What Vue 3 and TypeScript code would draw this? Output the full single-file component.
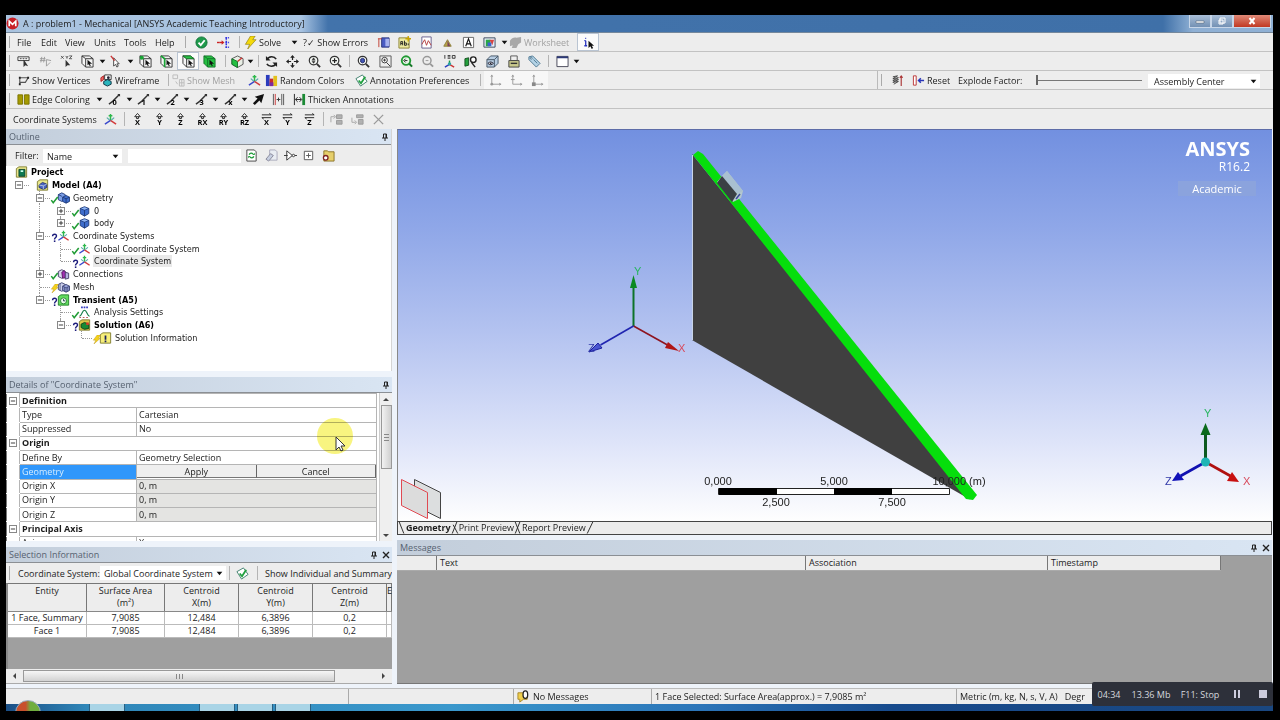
<script setup lang="ts">
import { ref } from 'vue'

type Kind = 'grip' | 'sep' | 'icon' | 'caret' | 'text'
interface Tool {
  k: Kind
  icon?: string
  label?: string
  title?: string
  cls?: string
  glyph?: string
}

const grip: Tool = { k: 'grip' }
const sep: Tool = { k: 'sep' }
const caret: Tool = { k: 'caret', title: 'More options' }
const ico = (icon: string, title: string, cls = '', glyph = ''): Tool => ({ k: 'icon', icon, title, cls, glyph })
const txt = (label: string, icon = '', cls = ''): Tool => ({ k: 'text', label, icon, cls })

const mainBar: Tool[] = [
  grip, txt('File'), txt('Edit'), txt('View'), txt('Units'), txt('Tools'), txt('Help'), grip,
  ico('ok', 'Check'), ico('branch', 'Branch'), sep, txt('Solve', 'bolt'), caret,
  txt('?✓ Show Errors'), ico('newwin', 'New Section'), ico('comment', 'Comment'), ico('chart', 'Chart'),
  ico('tag', 'Image'), ico('lettera', 'Annotation'), ico('figure', 'Figure'), caret,
  txt('Worksheet', 'sheet', 'off'), ico('info', 'Selection Information', 'pressed'),
]
const viewBar: Tool[] = [
  grip, ico('abc', 'Label'), ico('hash', 'Direction', 'off'), ico('xyz', 'Coordinates'), ico('pick', 'Select mode'), caret,
  ico('cursor', 'Select type'), caret, ico('vertex', 'Vertex'), ico('edge', 'Edge'), ico('face', 'Face', 'pressed'),
  ico('body', 'Body'), sep, ico('extend', 'Extend'), caret, sep, ico('rotate', 'Rotate'), ico('pan', 'Pan'),
  ico('zoom', 'Zoom'), ico('zoomin', 'Box Zoom'), sep, ico('fit', 'Zoom to Fit'), ico('magbox', 'Magnifier'),
  ico('prev', 'Previous View'), ico('next', 'Next View'), ico('iso', 'Isometric'), ico('look', 'Look At'),
  ico('views', 'Manage Views'), ico('print', 'Print'), ico('label', 'Tag'), sep, ico('window', 'Viewports'), caret,
]
const displayBar: Tool[] = [
  grip, txt('Show Vertices', 'verts'), txt('Wireframe', 'wire'), sep, txt('Show Mesh', 'mesh', 'off'),
  ico('triad', 'Show Coordinate Systems'), txt('Random Colors', 'colors'), txt('Annotation Preferences', 'prefs'), sep,
  ico('axis1', 'Axis', 'light'), ico('axis2', 'Axis', 'light'), ico('axis3', 'Axis', 'light'),
]
const edgeBar: Tool[] = [
  grip, txt('Edge Coloring', 'edges'), caret,
  ico('eline', 'Free', '', '0'), caret, ico('eline', 'Single', '', '1'), caret, ico('eline', 'Double', '', '2'), caret,
  ico('eline', 'Triple', '', '3'), caret, ico('eline', 'Multiple', '', 'x'), caret,
  ico('thick', 'Direction'), ico('pipes', 'Spacing'), txt('Thicken Annotations', 'thicken'),
]
const coordBar: Tool[] = [
  txt('Coordinate Systems'), ico('triad', 'Create Coordinate System'), sep,
  ico('offset', 'Offset X', '', 'X'), ico('offset', 'Offset Y', '', 'Y'), ico('offset', 'Offset Z', '', 'Z'),
  ico('offset', 'Rotate X', '', 'RX'), ico('offset', 'Rotate Y', '', 'RY'), ico('offset', 'Rotate Z', '', 'RZ'),
  ico('flip', 'Flip X', '', 'X'), ico('flip', 'Flip Y', '', 'Y'), ico('flip', 'Flip Z', '', 'Z'), sep,
  ico('up', 'Move Up', 'off'), ico('down', 'Move Down', 'off'), ico('del', 'Delete', 'off'),
]
const bars = [
  { name: 'main', items: mainBar },
  { name: 'view', items: viewBar },
  { name: 'display', items: displayBar },
  { name: 'edge', items: edgeBar },
  { name: 'coord', items: coordBar },
]

interface Node {
  label: string
  icon: string
  guides?: string[]
  joint?: string
  box?: string
  status?: string
  bold?: boolean
  selected?: boolean
}
const tree: Node[] = [
  { label: 'Project', icon: 'project', bold: true },
  { label: 'Model (A4)', icon: 'model', joint: 'first', box: '-', bold: true },
  { label: 'Geometry', icon: 'geom', guides: [''], joint: 'tee', box: '-', status: 'tick' },
  { label: '0', icon: 'cube', guides: ['', 'v'], joint: 'tee', box: '+', status: 'tick' },
  { label: 'body', icon: 'cube', guides: ['', 'v'], joint: 'last', box: '+', status: 'tick' },
  { label: 'Coordinate Systems', icon: 'triad', guides: [''], joint: 'tee', box: '-', status: 'ask' },
  { label: 'Global Coordinate System', icon: 'triad', guides: ['', 'v'], joint: 'tee', status: 'tick' },
  { label: 'Coordinate System', icon: 'triad', guides: ['', 'v'], joint: 'last', status: 'ask', selected: true },
  { label: 'Connections', icon: 'conn', guides: [''], joint: 'tee', box: '+', status: 'tick' },
  { label: 'Mesh', icon: 'meshes', guides: [''], joint: 'tee', status: 'flash' },
  { label: 'Transient (A5)', icon: 'clock', guides: [''], joint: 'last', box: '-', status: 'ask', bold: true },
  { label: 'Analysis Settings', icon: 'settings', guides: ['', ''], joint: 'tee', status: 'tick' },
  { label: 'Solution (A6)', icon: 'solution', guides: ['', ''], joint: 'last', box: '-', status: 'ask', bold: true },
  { label: 'Solution Information', icon: 'solinfo', guides: ['', '', ''], joint: 'last', status: 'flash' },
]

interface Detail {
  name: string
  value?: string
  group?: boolean
  ro?: boolean
  edit?: boolean
}
const details: Detail[] = [
  { name: 'Definition', group: true },
  { name: 'Type', value: 'Cartesian' },
  { name: 'Suppressed', value: 'No' },
  { name: 'Origin', group: true },
  { name: 'Define By', value: 'Geometry Selection' },
  { name: 'Geometry', edit: true },
  { name: 'Origin X', value: '0, m', ro: true },
  { name: 'Origin Y', value: '0, m', ro: true },
  { name: 'Origin Z', value: '0, m', ro: true },
  { name: 'Principal Axis', group: true },
  { name: 'Axis', value: 'X' },
]

const selection = [
  ['1 Face, Summary', '7,9085', '12,484', '6,3896', '0,2', ''],
  ['Face 1', '7,9085', '12,484', '6,3896', '0,2', ''],
]

const explode = ref(0)
const filterText = ref('')
</script>

<template>
  <svg class="defs" aria-hidden="true">
    <symbol id="caret" viewBox="0 0 8 8"><path d="M1.500 2.500h5L4 5.500z" fill="#111" /></symbol>
    <symbol id="pin" viewBox="0 0 8 8"><path d="M2.500 1v4M5.500 1v4M2.500 1h3M1 5h6M4 5v3" stroke="#222" fill="none" /><path d="M5 1v4" stroke="#222" /></symbol>
    <symbol id="close" viewBox="0 0 8 8"><path d="M1 1l6 6M7 1L1 7" stroke="#222" stroke-width="1.400" /></symbol>
    <symbol id="ok" viewBox="0 0 14 14"><circle cx="7" cy="7" r="6" fill="#1f9a4c" stroke="#0f7136" /><path d="M3.800 7.200l2.400 2.600 4.200-5.200" stroke="#fff" stroke-width="2" fill="none" /></symbol>
    <symbol id="branch" viewBox="0 0 14 14"><path d="M0 7h3" stroke="#c22" stroke-width="1.500" /><path d="M3 7h3" stroke="#c22" stroke-width="1.500" /><path d="M5 4.500L8 7 5 9.500z" fill="#c22" /><path d="M9 2h4M9 7h4M9 12h4M10 2v10" stroke="#3333e0" stroke-width="1.600" stroke-dasharray="2 1" fill="none" /></symbol>
    <symbol id="bolt" viewBox="0 0 14 14"><path d="M7 0h5L9.500 4H13L4 14l2-5H1.500z" fill="#f4d90a" stroke="#8d7c12" stroke-width=".7" /></symbol>
    <symbol id="newwin" viewBox="0 0 14 14"><path d="M5 2h8v10H5z" fill="#4a5cc4" stroke="#2b357c" /><path d="M2 3v9M1 3h4" stroke="#c03a2e" fill="none" /><path d="M9 3h4v8H9z" fill="#a6b2ee" /></symbol>
    <symbol id="comment" viewBox="0 0 14 14"><path d="M1 2h11v11H1z" fill="#eceaa0" stroke="#8a8334" /><path d="M3 10V6h2v4M3 8h2M7 5v5h2V7.500H7M11 8v2" stroke="#222" fill="none" /><path d="M11 0v6M8 3h6" stroke="#c9a400" stroke-width="1.500" /></symbol>
    <symbol id="chart" viewBox="0 0 14 14"><path d="M2 1h10v12H2z" fill="#fff" stroke="#675f8c" /><path d="M2 9l3-5 2 6 2-5 3 5" stroke="#b33c3c" fill="none" /></symbol>
    <symbol id="tag" viewBox="0 0 14 14"><path d="M7 4l4 7H3z" fill="#b8a34a" stroke="#8e7f3a" /><path d="M7 5l3 6H7z" fill="#7a3f5d" /></symbol>
    <symbol id="lettera" viewBox="0 0 14 14"><path d="M1.500 1.500h11v11h-11z" fill="#fff" stroke="#666" /><path d="M4 11l3-8 3 8M5 8.500h4" stroke="#111" fill="none" stroke-width="1.200" /></symbol>
    <symbol id="figure" viewBox="0 0 14 14"><path d="M1 2h12v10H1z" fill="#e8f0f8" stroke="#38465c" /><path d="M3 4h5v7H3z" fill="#28a745" /><path d="M7 4h5l-2 6z" fill="#d84343" /><path d="M5 7h4v4H5z" fill="#3a63cf" /></symbol>
    <symbol id="sheet" viewBox="0 0 14 14"><path d="M1 5c2-3 5-4 7-3l5-1v6l-3 2-2 4H3l1-3-3 1z" fill="#8c8c8c" /></symbol>
    <symbol id="info" viewBox="0 0 14 14"><path d="M4 5v5M2.500 5H4M2.500 10.500h3M3.500 2.500h1" stroke="#2a35c0" stroke-width="1.400" fill="none" /><path d="M7 5v8l2-2 1.500 3 1.500-1-1.500-2.500H13z" fill="#111" /></symbol>
    <symbol id="abc" viewBox="0 0 14 14"><path d="M1 2h12v4H1z" fill="#fff" stroke="#333" /><path d="M3 4h8" stroke="#333" stroke-dasharray="2 1" /><path d="M7 5v8l2-2 3 1-4-6" fill="#333" /></symbol>
    <symbol id="hash" viewBox="0 0 14 14"><path d="M3 2L2 8M6 2L5 8M1 4h6M1 6h6M8 5v7l4-4M8 5l5 1" stroke="#777" fill="none" /></symbol>
    <symbol id="xyz" viewBox="0 0 14 14"><path d="M1 1l3 3M4 1L1 4M6 1l1.500 1.500L9 1M7.500 2v2M10 1h3l-3 3h3" stroke="#333" fill="none" stroke-width=".8" /><path d="M6 5v8l2-2 3 0z" fill="#333" /></symbol>
    <symbol id="cubeline" viewBox="0 0 14 14"><path d="M1 1h8l4 3v9H5L1 9zM1 1l4 3h8M5 4v9" fill="#f6f6f6" stroke="#333" /></symbol>
    <symbol id="pick" viewBox="0 0 14 14"><use href="#cubeline" /><path d="M7 5v6l1.500-1 1 2 1-.5-1-2H12z" fill="#111" /></symbol>
    <symbol id="cursor" viewBox="0 0 14 14"><path d="M5 3v9l2-2 1.500 3 1.500-1-1.500-2.500H11z" fill="#fff" stroke="#444" /><path d="M2 1l4 5" stroke="#c33" stroke-width="1.500" /></symbol>
    <symbol id="vertex" viewBox="0 0 14 14"><use href="#cubeline" /><circle cx="3" cy="3" r="2.200" fill="#19a535" /><path d="M7 5v6l1.500-1 1 2 1-.5-1-2H12z" fill="#111" /></symbol>
    <symbol id="edge" viewBox="0 0 14 14"><use href="#cubeline" /><path d="M1 1l4 3v9" stroke="#19a535" stroke-width="1.800" fill="none" /><path d="M7 5v6l1.500-1 1 2 1-.5-1-2H12z" fill="#111" /></symbol>
    <symbol id="face" viewBox="0 0 14 14"><use href="#cubeline" /><path d="M1 1h8l4 3H5z" fill="#27c445" stroke="#17792a" /><path d="M7 5v6l1.500-1 1 2 1-.5-1-2H12z" fill="#111" /></symbol>
    <symbol id="body" viewBox="0 0 14 14"><path d="M1 1h8l4 3v9H5L1 9z" fill="#25bf41" stroke="#15732a" /><path d="M1 1l4 3h8M5 4v9" fill="none" stroke="#15732a" /><path d="M7 5v6l1.500-1 1 2 1-.5-1-2H12z" fill="#111" /></symbol>
    <symbol id="extend" viewBox="0 0 14 14"><path d="M1 4l6-3 6 3v6l-6 3.500L1 10z" fill="#e9efe6" stroke="#555" /><path d="M1 4l6 3v6.500L1 10z" fill="#25bf41" stroke="#15732a" /><path d="M7 7l5-4" stroke="#c33" stroke-width="1.500" /></symbol>
    <symbol id="rotate" viewBox="0 0 14 14"><path d="M2 5c2-4 8-4 10-.5M12 9c-2 4-8 4-10 .5" fill="none" stroke="#222" stroke-width="1.700" /><path d="M1 1v5h5zM13 13V8H8z" fill="#222" /></symbol>
    <symbol id="pan" viewBox="0 0 14 14"><path d="M7 2v3.500M7 8.500V12M2 7h3.500M8.500 7H12" stroke="#222" stroke-width="1.300" /><path d="M7 0l2.500 3h-5zM7 14l2.500-3h-5zM0 7l3-2.500v5zM14 7l-3-2.500v5z" fill="#222" /></symbol>
    <symbol id="lens" viewBox="0 0 14 14"><circle cx="6" cy="6" r="4.600" fill="#f5f8f5" stroke="#333" stroke-width="1.300" /><path d="M9.500 9.500L13 13" stroke="#333" stroke-width="2" /></symbol>
    <symbol id="zoom" viewBox="0 0 14 14"><use href="#lens" /><path d="M6 3l1.500 2h-3zM6 9l1.500-2h-3zM4 6h4" fill="#222" stroke="#222" stroke-width=".5" /></symbol>
    <symbol id="zoomin" viewBox="0 0 14 14"><use href="#lens" /><path d="M6 3.500v5M3.500 6h5" stroke="#222" stroke-width="1.300" /></symbol>
    <symbol id="fit" viewBox="0 0 14 14"><use href="#lens" /><path d="M4 4.500L6 3.500l2 1v3L6 8.500l-2-1z" fill="#4457b8" stroke="#222a66" /></symbol>
    <symbol id="magbox" viewBox="0 0 14 14"><path d="M1 1h12v12H1z" fill="#eee" stroke="#555" /><circle cx="6" cy="5.500" r="3" fill="#fff" stroke="#333" /><path d="M8 8l4 4M6 4v3M4.500 5.500h3" stroke="#333" /></symbol>
    <symbol id="prev" viewBox="0 0 14 14"><circle cx="6.500" cy="6" r="4.600" fill="#e9f7ea" stroke="#219a35" stroke-width="2" /><path d="M10 9.500l3 3" stroke="#17792a" stroke-width="2.200" /><path d="M8 6H5M6 4L4 6l2 2" stroke="#222" fill="none" /></symbol>
    <symbol id="next" viewBox="0 0 14 14"><circle cx="6.500" cy="6" r="4.300" fill="#eee" stroke="#999" stroke-width="1.600" /><path d="M10 9.500l3 3" stroke="#999" stroke-width="2" /><path d="M5 6h3" stroke="#999" /></symbol>
    <symbol id="iso" viewBox="0 0 14 14"><path d="M2 0v4M5 .5h3M5 2h3M5 3.500h3M10 .5h3v3h-3z" stroke="#333" fill="none" /><path d="M7 6v4" stroke="#1a9a3a" stroke-width="1.500" /><path d="M7 10l-5 3" stroke="#2a3fc0" stroke-width="1.500" /><path d="M7 10l5 3" stroke="#c33" stroke-width="1.500" /><circle cx="7" cy="9.500" r="1.800" fill="#2aa5a5" /></symbol>
    <symbol id="look" viewBox="0 0 14 14"><path d="M1 4l4-1v8l-4 1z" fill="#24a03c" stroke="#134f1f" /><circle cx="10" cy="5" r="3" fill="#fff" stroke="#222" stroke-width="1.500" /><path d="M8 8l4 5" stroke="#222" stroke-width="1.500" /></symbol>
    <symbol id="views" viewBox="0 0 14 14"><path d="M1 5l4-4h8v8l-4 4H1z" fill="#b8cde2" stroke="#456" /><path d="M1 5h8v8M9 5l4-4" fill="none" stroke="#456" /><path d="M2 9c2-2 4-2 6 0-2 2-4 2-6 0z" fill="#fff" stroke="#223" /><circle cx="5" cy="9" r="1" fill="#223" /></symbol>
    <symbol id="print" viewBox="0 0 14 14"><path d="M4 1h7v5H4z" fill="#eee" stroke="#555" /><path d="M2 6h11v7H2z" fill="#c9c98c" stroke="#444" /><path d="M4 9h7" stroke="#333" stroke-width="1.500" /></symbol>
    <symbol id="label" viewBox="0 0 14 14"><path d="M1 2l4-1 8 8-4 4-8-8z" fill="#b4d3e6" stroke="#4b7590" /><circle cx="3.500" cy="3.500" r="1" fill="#fff" stroke="#4b7590" /><path d="M6 5l4 4" stroke="#4b7590" /></symbol>
    <symbol id="window" viewBox="0 0 14 14"><path d="M1 1.500h12v11H1z" fill="#fff" stroke="#445" /><path d="M1 2.500h12" stroke="#2d3a78" stroke-width="2" /></symbol>
    <symbol id="verts" viewBox="0 0 14 14"><path d="M3 11V4h9L9 9H3" stroke="#555" fill="none" stroke-width="1.200" /><path d="M2 10h2v2H2zM2 3h2v2H2zM11 3h2v2h-2z" fill="#222" /></symbol>
    <symbol id="wire" viewBox="0 0 14 14"><path d="M1 4l3-2v4l-3 2z" fill="#e66" stroke="#a22" /><path d="M5 1h7v5H5z" fill="#fff" stroke="#333" /><path d="M4 8l4-2 4 2v3l-4 2-4-2z" fill="#2bb5bd" stroke="#134" /><circle cx="9" cy="4" r="1.500" fill="#223" /></symbol>
    <symbol id="mesh" viewBox="0 0 14 14"><path d="M1 1h5v4H1zM8 6h5v7H8zM8 9.500h5M10.500 6v7M4 8l2 3" fill="none" stroke="#a5a5a5" /></symbol>
    <symbol id="triad" viewBox="0 0 14 14"><path d="M7 8V1M7 3l-2 0M7 3l2 0" stroke="#2db84c" stroke-width="1.600" /><path d="M7 8l-6 4" stroke="#3a49cc" stroke-width="1.600" /><path d="M7 8l6 4" stroke="#d33a3a" stroke-width="1.600" /><path d="M3 5l3 2.500M11 5L8 7.500" stroke="#5aa" stroke-width="1.200" /></symbol>
    <symbol id="colors" viewBox="0 0 14 14"><path d="M1 1h4v12H1z" fill="#2a3bbd" /><path d="M5 5h4v8H5z" fill="#c92b2b" /><path d="M9 2h4v11H9z" fill="#e3c11c" /><path d="M5 9h4v4H5z" fill="#7a2ba0" /></symbol>
    <symbol id="prefs" viewBox="0 0 14 14"><path d="M1 5l7-4 5 7-7 5z" fill="#fff" stroke="#3f7f6c" /><path d="M4 7l2.500 3L11 3" stroke="#22a040" stroke-width="2" fill="none" /></symbol>
    <symbol id="axis1" viewBox="0 0 14 14"><path d="M3 2v9h9M2 3l1-2 1 2M11 10l2 1-2 1" stroke="#999" fill="none" /><circle cx="3" cy="11" r="1.500" fill="#999" /></symbol>
    <symbol id="axis2" viewBox="0 0 14 14"><path d="M3 2v9h9M2 3l1-2 1 2M11 10l2 1-2 1M1 6h4" stroke="#999" fill="none" /></symbol>
    <symbol id="axis3" viewBox="0 0 14 14"><path d="M3 2v9h9M2 3l1-2 1 2M11 10l2 1-2 1" stroke="#999" fill="none" /><path d="M1 9h4v4H1z" fill="#888" /></symbol>
    <symbol id="edges" viewBox="0 0 14 14"><path d="M1 2h5v10H1zM8 2h5v10H8z" fill="#a59a00" stroke="#7b7300" /></symbol>
    <symbol id="eline" viewBox="0 0 14 14"><path d="M1 12l4-3 7-7" stroke="#333" stroke-width="1.500" fill="none" /><path d="M10 1h3v3z" fill="#333" /></symbol>
    <symbol id="offset" viewBox="0 0 14 14"><path d="M7 .5l3 3.500H4zM6 4v2h2V4" fill="#fff" stroke="#222" /></symbol>
    <symbol id="flip" viewBox="0 0 14 14"><path d="M2 2h10M10 .5L12 2M2 5h10M4 6.500L2 5" fill="none" stroke="#222" /></symbol>
    <symbol id="thick" viewBox="0 0 14 14"><path d="M13 1L3 4l3 2-5 5 2 2 5-5 2 3z" fill="#111" /></symbol>
    <symbol id="pipes" viewBox="0 0 14 14"><path d="M1.500 1v12M10.500 1v12M12.500 1v12" stroke="#555" fill="none" /><path d="M3.500 1v12" stroke="#c33" /><path d="M5 7h4M7 5v4" stroke="#333" /></symbol>
    <symbol id="thicken" viewBox="0 0 14 14"><path d="M1.500 1v12" stroke="#222" /><path d="M11.500 1v12" stroke="#1b8a35" stroke-width="3" /><path d="M3 7h6" stroke="#222" /><path d="M5 4.500L2.500 7 5 9.500M7 4.500L9.500 7 7 9.500" fill="none" stroke="#222" /></symbol>
    <symbol id="up" viewBox="0 0 14 14"><path d="M1 10V4h4M4 2l2 2-2 2" stroke="#888" fill="none" /><path d="M7 2h6v4H7zM7 8h6v4H7z" fill="#999" stroke="#777" /></symbol>
    <symbol id="down" viewBox="0 0 14 14"><path d="M1 5v5h4M4 8l2 2-2 2" stroke="#888" fill="none" /><path d="M6 2h7v3H6zM8 7h5v5H8z" fill="#999" stroke="#777" /></symbol>
    <symbol id="del" viewBox="0 0 14 14"><path d="M2 2l10 10M12 2L2 12" stroke="#777" stroke-width="1.400" /></symbol>
    <symbol id="spring" viewBox="0 0 14 14"><path d="M2 3l5-1-5 3 6-1-6 3 6-1-6 3 6-1-5 3" stroke="#444" fill="none" /><path d="M11 13V2M9.500 4L11 2l1.500 2" stroke="#a33" fill="none" stroke-width="1.200" /></symbol>
    <symbol id="reset" viewBox="0 0 14 14"><path d="M1.500 2h3v10h-3z" fill="#fff" stroke="#b33" /><path d="M13 7H7M9.500 4.500L7 7l2.500 2.500" stroke="#2b36b8" stroke-width="1.600" fill="none" /></symbol>
    <symbol id="refresh" viewBox="0 0 14 14"><path d="M2 1h8l2 2v10H2z" fill="#fff" stroke="#444" /><path d="M4.500 6c1-2 3-2 4-.5M9.500 8c-1 2-3 2-4 .5" stroke="#1b9a35" stroke-width="1.500" fill="none" /><path d="M8 6.500h2.500V4zM6 7.500H3.500V10z" fill="#1b9a35" /></symbol>
    <symbol id="eraser" viewBox="0 0 14 14"><path d="M5 1h6l2 2v9H5z" fill="#e9edf3" stroke="#aab" /><path d="M1 11l5-6 3 2-5 6z" fill="#c6cee0" stroke="#889" /></symbol>
    <symbol id="gate" viewBox="0 0 14 14"><path d="M0 7h4M3 2v10l6-5zM11.500 7H14" fill="#fff" stroke="#333" /><circle cx="10.200" cy="7" r="1.300" fill="#fff" stroke="#333" /></symbol>
    <symbol id="plusbox" viewBox="0 0 14 14"><path d="M2.500 2.500h9v9h-9zM4.500 7h5M7 4.500v5" fill="#fff" stroke="#555" /></symbol>
    <symbol id="foldcog" viewBox="0 0 14 14"><path d="M2 2h4l1 1h6v10H2z" fill="#e6cf6b" stroke="#8a7426" /><circle cx="4" cy="9.500" r="2.500" fill="#fff" stroke="#7c2222" stroke-width="1.400" /></symbol>
    <symbol id="project" viewBox="0 0 14 14"><path d="M1 3l3-2h9v12H1z" fill="#e9e78c" stroke="#77752a" /><path d="M4 4h7v8H4z" fill="#0f7a52" stroke="#0a3f2c" /><path d="M6 5h3v2H6z" fill="#cfe" /></symbol>
    <symbol id="model" viewBox="0 0 14 14"><path d="M1 3l3-2h9v12H1z" fill="#e9e78c" stroke="#77752a" /><path d="M3 7l4-3 5 2v4l-4 2-5-2z" fill="#4863c4" stroke="#1c2a6b" /><path d="M3 7l5 1v4M8 8l4-2" stroke="#bcd" fill="none" /></symbol>
    <symbol id="cube" viewBox="0 0 14 14"><path d="M2 4l5-2 5 2v6l-5 3-5-3z" fill="#3e6dcc" stroke="#1c3775" /><path d="M2 4l5 2 5-2M7 6v7" stroke="#1c3775" fill="none" /><path d="M3 4l4-1.500L11 4 7 5.500z" fill="#90b5f2" /></symbol>
    <symbol id="geom" viewBox="0 0 14 14"><path d="M1 3l4-2 4 2v6l-4 2-4-2z" fill="#7ea0e8" stroke="#1c3775" /><path d="M6 6l4-2 4 2v5l-4 2-4-2z" fill="#3e6dcc" stroke="#1c3775" /><path d="M6 6l4 2 4-2M10 8v5M1 3l4 2" stroke="#1c3775" fill="none" /></symbol>
    <symbol id="conn" viewBox="0 0 14 14"><path d="M1 4l4-2 4 2v6l-4 2-4-2z" fill="#d9d5ee" stroke="#3b3460" /><path d="M5 5l3-2 2 3v5l-4 1z" fill="#a32fb3" stroke="#52145c" /><path d="M9 5l4 1v6l-4 1z" fill="#b7b2e0" stroke="#3b3460" /></symbol>
    <symbol id="meshes" viewBox="0 0 14 14"><path d="M1 4l4-2 4 2v6l-4 2-4-2z" fill="#ccd0ec" stroke="#31386a" /><path d="M6 6l4-2 4 2v5l-4 2-4-2z" fill="#9aa5dc" stroke="#31386a" /><path d="M3 3v8M6 6l4 2 4-2M10 8v5M8 7v5M12 7v5" stroke="#31386a" fill="none" stroke-width=".8" /></symbol>
    <symbol id="clock" viewBox="0 0 14 14"><path d="M1 3l3-2h9v12H1z" fill="#62dc5e" stroke="#1d7a28" /><circle cx="7" cy="8" r="3.500" fill="#eafcec" stroke="#1d7a28" /><path d="M7 6v2h2" stroke="#124" fill="none" /></symbol>
    <symbol id="settings" viewBox="0 0 14 14"><path d="M1 12c3 0 3-7 6-7s3 7 6 7" stroke="#177d48" fill="none" stroke-width="1.300" /><path d="M3 1.500h9" stroke="#333ac0" stroke-width="2" stroke-dasharray="2 1" /><path d="M1 13.500h12" stroke="#a33" stroke-dasharray="2 2" /></symbol>
    <symbol id="solution" viewBox="0 0 14 14"><path d="M1 3l3-2h9v12H1z" fill="#dcc94a" stroke="#77752a" /><path d="M3 6l4-2 5 2v5l-5 1-4-2z" fill="#178a34" stroke="#0a3d16" /><path d="M9 4h3v3H9z" fill="#d43b2c" /></symbol>
    <symbol id="solinfo" viewBox="0 0 14 14"><path d="M1 3l3-2h9v12H1z" fill="#f6ee7a" stroke="#77752a" /><path d="M6 4h2v5H6zM6 10h2v2H6z" fill="#18205c" /></symbol>
    <symbol id="tick" viewBox="0 0 14 14"><path d="M2 8l3 4 7-9" stroke="#219c35" stroke-width="2.400" fill="none" /></symbol>
    <symbol id="ask" viewBox="0 0 14 14"><path d="M4 5c0-4 7-4 6 0 0 2-3 2-3 5" stroke="#1d1d7c" stroke-width="2.200" fill="none" /><path d="M6 11.500h2.400V14H6z" fill="#1d1d7c" /></symbol>
    <symbol id="flash" viewBox="0 0 14 14"><path d="M8 0h5l-3 5h3L3 14l3-6H2z" fill="#f5d21a" stroke="#b38b14" stroke-width=".6" /></symbol>
    <symbol id="balloon" viewBox="0 0 14 14"><path d="M1 3h10v7H7l-4 3v-3H1z" fill="#f0cf4c" stroke="#a8872a" /><ellipse cx="9" cy="5" rx="2.500" ry="4" fill="#fff" stroke="#222" stroke-width="1.400" /></symbol>
  </svg>

  <div class="screen">
    <div class="window">
      <header class="title">
        <svg class="logo" viewBox="0 0 14 14"><circle cx="7" cy="7" r="6.500" fill="#c81f26" /><path d="M3.500 10V4.500L7 8l3.500-3.500V10" stroke="#fff" stroke-width="1.800" fill="none" /></svg>
        <h1>A : problem1 - Mechanical [ANSYS Academic Teaching Introductory]</h1>
        <div class="winbtns">
          <button aria-label="Minimize"><svg viewBox="0 0 10 8"><path d="M1 4h8v2H1z" fill="#fff" stroke="#456" stroke-width=".5" /></svg></button>
          <button aria-label="Restore"><svg viewBox="0 0 10 8"><path d="M3 1h5v5H3zM2 3h4v4H2z" fill="none" stroke="#fff" /></svg></button>
          <button class="x" aria-label="Close"><svg viewBox="0 0 10 8"><path d="M2.500 1l5 6M7.500 1l-5 6" stroke="#fff" stroke-width="2" /></svg></button>
        </div>
      </header>

      <div v-for="bar in bars" :key="bar.name" class="bar" :class="bar.name">
        <template v-for="(t, i) in bar.items" :key="i">
          <span v-if="t.k === 'grip'" class="grip"></span>
          <span v-else-if="t.k === 'sep'" class="vsep"></span>
          <button v-else-if="t.k === 'caret'" class="caret" :aria-label="t.title"><svg><use href="#caret" /></svg></button>
          <button v-else-if="t.k === 'icon'" class="ib" :class="t.cls" :aria-label="t.title"><svg viewBox="0 0 14 14"><use :href="'#' + t.icon" /><text v-if="t.glyph" x="7" y="13" class="glyph">{{ t.glyph }}</text></svg></button>
          <button v-else class="tb" :class="t.cls"><svg v-if="t.icon"><use :href="'#' + t.icon" /></svg>{{ t.label }}</button>
        </template>
        <div v-if="bar.name === 'display'" class="explode">
          <span class="grip"></span>
          <button class="ib" aria-label="Explode view"><svg><use href="#spring" /></svg></button>
          <button class="tb"><svg><use href="#reset" /></svg>Reset</button>
          <label for="explode">Explode Factor:</label>
          <input id="explode" v-model="explode" type="range" min="0" max="100" />
          <span class="sel"><select aria-label="Explode origin"><option>Assembly Center</option></select><svg><use href="#caret" /></svg></span>
        </div>
      </div>

      <div class="work">
        <aside class="left">
          <section class="panel outline">
            <h2 class="head">Outline<span class="tools"><button aria-label="Pin"><svg><use href="#pin" /></svg></button></span></h2>
            <div class="filter">
              <label for="filter">Filter:</label>
              <span class="sel"><select id="filter"><option>Name</option></select><svg><use href="#caret" /></svg></span>
              <input v-model="filterText" type="text" aria-label="Filter text" />
              <button v-for="n in ['refresh', 'eraser', 'gate', 'plusbox', 'foldcog']" :key="n" class="ib" :aria-label="n"><svg><use :href="'#' + n" /></svg></button>
            </div>
            <ul class="tree">
              <li v-for="n in tree" :key="n.label">
                <span v-for="(g, i) in n.guides" :key="i" class="guide" :class="g"></span>
                <span v-if="n.joint" class="guide" :class="[n.joint, n.box ? 'boxed' : '']"><button v-if="n.box" class="box" :aria-label="'Toggle ' + n.label"><svg viewBox="0 0 7 7"><path :d="n.box === '+' ? 'M1 3.500h5M3.500 1v5' : 'M1 3.500h5'" stroke="#222" /></svg></button></span>
                <span class="status"><svg v-if="n.status"><use :href="'#' + n.status" /></svg></span>
                <svg class="nic"><use :href="'#' + n.icon" /></svg>
                <span class="lbl" :class="{ bold: n.bold, selected: n.selected }">{{ n.label }}</span>
              </li>
            </ul>
          </section>

          <section class="panel details">
            <h2 class="head">Details of "Coordinate System"<span class="tools"><button aria-label="Pin"><svg><use href="#pin" /></svg></button></span></h2>
            <div class="dbody">
              <div class="dclip">
                <table>
                  <colgroup><col class="c1" /><col class="c2" /><col /></colgroup>
                  <tbody>
                    <tr v-for="d in details" :key="d.name" :class="{ group: d.group, ro: d.ro, edit: d.edit }">
                      <td class="tg"><button v-if="d.group" class="box" :aria-label="'Toggle ' + d.name"><svg viewBox="0 0 7 7"><path d="M1 3.500h5" stroke="#222" /></svg></button></td>
                      <th scope="row" :colspan="d.group ? 2 : 1">{{ d.name }}</th>
                      <td v-if="!d.group"><div v-if="d.edit" class="pair"><button>Apply</button><button>Cancel</button></div><template v-else>{{ d.value }}</template></td>
                    </tr>
                  </tbody>
                </table>
              </div>
              <div class="vscroll"><i class="up"></i><span class="thumb"></span><i class="dn"></i></div>
            </div>
            <svg class="pointer" viewBox="0 0 36 36"><circle cx="18" cy="18" r="18" fill="#f7f26a" opacity=".85" /><path d="M19 19v13l3-3 2 4 2-1-2-4h4z" fill="#fff" stroke="#333" /></svg>
          </section>

          <section class="panel selinfo">
            <h2 class="head">Selection Information<span class="tools"><button aria-label="Pin"><svg><use href="#pin" /></svg></button><button aria-label="Close"><svg><use href="#close" /></svg></button></span></h2>
            <div class="seltool">
              <span class="grip"></span>
              <label for="cs">Coordinate System:</label>
              <span class="sel"><select id="cs"><option>Global Coordinate System</option></select><svg><use href="#caret" /></svg></span>
              <span class="vsep"></span>
              <button class="ib" aria-label="Preferences"><svg><use href="#prefs" /></svg></button>
              <span class="vsep"></span>
              <button class="tb">Show Individual and Summary</button>
            </div>
            <div class="selbody">
              <table>
                <thead>
                  <tr><th>Entity</th><th>Surface Area<br />(m²)</th><th>Centroid<br />X(m)</th><th>Centroid<br />Y(m)</th><th>Centroid<br />Z(m)</th><th class="cut">E</th></tr>
                </thead>
                <tbody>
                  <tr v-for="r in selection" :key="r[0]"><td v-for="(c, i) in r" :key="i">{{ c }}</td></tr>
                </tbody>
              </table>
            </div>
            <div class="hscroll"><i class="lt"></i><span class="thumb"></span><i class="rt"></i></div>
          </section>
        </aside>

        <main class="right">
          <div class="viewport">
            <svg class="scene" viewBox="397 129 620 391">
              <path d="M692 154V340L970 499.500z" fill="#404040" />
              <path d="M692.500 155V340" stroke="#c8d4e8" />
              <path d="M693 155l5-4 5 3 274 341-4 5-7-1z" fill="#06de0c" />
              <path d="M722 176l5-5 16 20-2 7-8 4-16-20z" fill="#b4c8cc" />
              <path d="M727 171l16 20-6 3-15-18z" fill="#a9c0d0" />
              <path d="M722 176l15 18-5 8-15-19z" fill="#3a4044" />
              <path d="M736 199l4-5" stroke="#39499c" stroke-width="1.500" />
              <path d="M633.500 326V287" stroke="#0d7328" stroke-width="2" /><path d="M633.500 275l3.500 13h-7z" fill="#0b8a22" />
              <path d="M633.500 326l34 19" stroke="#8e1420" stroke-width="1.600" /><path d="M679 351l-14-3 3-6z" fill="#b01515" />
              <path d="M633.500 326l-33 19" stroke="#2025b0" stroke-width="1.600" /><path d="M589 352l9-9 4 5z" fill="#4a55d0" stroke="#1b1fa0" />
              <text x="634" y="275" class="lg">Y</text><text x="678" y="352" class="lr">X</text><text x="588" y="352" class="lb">Z</text>
              <path d="M414.500 479.500l26 13v26l-26-13z" fill="#dcdedf" stroke="#444" />
              <path d="M401.500 479.500l26 13v26l-26-13z" fill="#dcdcdc" stroke="#e04a52" />
              <path d="M718.500 488.500h231v6h-231z" fill="#fff" stroke="#222" />
              <path d="M719 488h58v7h-58zM834 488h58v7h-58z" fill="#000" />
              <g class="scale"><text x="718" y="485">0,000</text><text x="834" y="485">5,000</text><text x="959" y="485">10,000 (m)</text><text x="776" y="506">2,500</text><text x="892" y="506">7,500</text></g>
            </svg>
            <div class="brand"><strong>ANSYS</strong><span>R16.2</span><em>Academic</em></div>
            <svg class="orient" viewBox="1160 405 98 85">
              <path d="M1205.500 462v-28" stroke="#0d5a20" stroke-width="3" /><path d="M1205.500 423l5 12h-10z" fill="#0b6a1c" />
              <path d="M1205.500 462l25 14" stroke="#b01010" stroke-width="2.600" /><path d="M1239 482l-12-1 5-9z" fill="#c81010" />
              <path d="M1205.500 462l-25 14" stroke="#1010b0" stroke-width="2.600" /><path d="M1172 481l6-9 6 8z" fill="#1010b8" />
              <circle cx="1205.500" cy="462" r="4.500" fill="#1fb5b5" />
              <text x="1204" y="417" class="lg">Y</text><text x="1243" y="485" class="lr">X</text><text x="1165" y="485" class="lb">Z</text>
            </svg>
          </div>
          <nav class="tabs">
            <svg viewBox="0 0 8 13"><path d="M1 0l5 12.500" stroke="#222" fill="none" /></svg>
            <button class="on">Geometry</button>
            <svg viewBox="0 0 8 13"><path d="M1 12.500L6 0M2 3l5 9.500" stroke="#222" fill="none" /></svg>
            <button>Print Preview</button>
            <svg viewBox="0 0 8 13"><path d="M1 12.500L6 0M1 0l5 12.500" stroke="#222" fill="none" /></svg>
            <button>Report Preview</button>
            <svg viewBox="0 0 8 13"><path d="M1 12.500L7 0" stroke="#222" fill="none" /></svg>
          </nav>
          <section class="panel messages">
            <h2 class="head">Messages<span class="tools"><button aria-label="Pin"><svg><use href="#pin" /></svg></button><button aria-label="Close"><svg><use href="#close" /></svg></button></span></h2>
            <div class="mbody">
              <table><thead><tr><th aria-label="Type"></th><th>Text</th><th>Association</th><th>Timestamp</th></tr></thead></table>
            </div>
          </section>
        </main>
      </div>

      <footer class="statusbar">
        <span></span><span></span>
        <span><svg><use href="#balloon" /></svg>No Messages</span>
        <span>1 Face Selected: Surface Area(approx.) = 7,9085 m²</span>
        <span>Metric (m, kg, N, s, V, A)&nbsp;&nbsp; Degr</span>
      </footer>
      <div class="taskbar">
        <span class="orb"></span><i></i><i></i><i></i><i></i>
      </div>
      <div class="recorder">
        <span>04:34</span><span>13.36 Mb</span><button>F11: Stop</button>
        <button aria-label="Pause"><svg viewBox="0 0 8 8"><path d="M1 0h2v8H1zM5 0h2v8H5z" fill="#ccd" /></svg></button>
        <button aria-label="Stop recording"><svg viewBox="0 0 8 8"><path d="M0 0h8v8H0z" fill="#ccd" /></svg></button>
      </div>
    </div>
  </div>
</template>

<style>
body { background: #000; }
</style>

<style scoped>
.defs { position: absolute; width: 0; height: 0; }
.glyph { font: bold 8px "Open Sans", sans-serif; text-anchor: middle; }
.screen {
  box-sizing: border-box;
  min-height: 100vh;
  padding: 15px 7px 9px 6px;
  background: #000;
  display: flex;
  font-family: "Open Sans", "Noto Sans", sans-serif;
  font-size: 9px;
  color: #1c1c1c;
}
.window { position: relative; flex: 1; min-width: 0; display: flex; flex-direction: column; background: #eef3fa; overflow: hidden; }
button, input, select { font: inherit; color: inherit; margin: 0; padding: 0; border: 0; background: none; white-space: nowrap; }
svg { display: block; flex: none; }

.title { display: flex; align-items: center; height: 17px; background: linear-gradient(90deg, #a9c3df 0, #a9c4e2 295px, #4273ab 322px, #3f70a8 calc(100% - 110px), #8fb0d4 calc(100% - 80px), #8fb0d4 100%); border-bottom: 1px solid #75889c; }
.logo { width: 13px; height: 13px; }
.title h1 { margin: 0 0 0 4px; font-size: 9px; font-weight: 400; flex: 1; }
.winbtns { display: flex; align-self: flex-start; margin-right: 2px; }
.winbtns button { width: 22px; height: 13px; border: 1px solid #c7d6e8; border-top: 0; background: linear-gradient(#a9bfd8, #7391b4); display: flex; align-items: center; justify-content: center; }
.winbtns .x { width: 38px; background: linear-gradient(#e08a78, #c13822); }
.winbtns svg { width: 10px; height: 8px; }

.bar { display: grid; align-items: stretch; height: 18px; background: #ededed; border-bottom: 1px solid #c2c2c2; }
.bar.main { grid-template-columns: 11px 24px 24px 29px 30px 31px 27px 8px 23px 21px 10px 42px 17px 69px 22px 21px 22px 21px 21px 21px 9px 68px 22px 1fr; }
.bar.view { grid-template-columns: 6px 22px 22px 21px 21px 8px 19px 10px 21px 21px 22px 21px 10px 15px 10px 6px 21px 21px 22px 21px 7px 21px 22px 21px 21px 22px 21px 22px 21px 21px 7px 20px 8px 1fr; }
.bar.display { grid-template-columns: 11px 83px 65px 7px 72px 21px 90px 121px 8px 22px 21px 21px 1fr; }
.bar.edge { grid-template-columns: 11px 77px 10px 21px 8px 20px 9px 20px 9px 20px 9px 20px 9px 19px 21px 1fr; }
.bar.coord { grid-template-columns: 94px 21px 6px 21px 22px 21px 22px 21px 21px 22px 21px 22px 6px 21px 21px 21px 1fr; height: 20px; border-bottom: 0; }
.grip { margin: 3px 0 3px 2px; width: 1px; border-right: 1px solid #aaa; }
.vsep { justify-self: center; width: 1px; margin: 3px 0; background: #b4b4b4; }
.tb { display: flex; align-items: center; gap: 2px; text-align: left; }
.tb svg { width: 13px; height: 13px; }
.edge .tb:last-child { padding-left: 4px; }
.coord .tb { padding-left: 7px; }
.ib { display: flex; align-items: center; justify-content: center; }
.ib svg { width: 13px; height: 13px; }
.caret { display: flex; align-items: center; justify-content: center; }
.caret svg, .sel svg { width: 9px; height: 9px; }
.off { color: #a2a2a2; }
.off svg { opacity: .7; }
.pressed { background: #fbfbfb; border: 1px solid #b9c4d2; }
.light { background: #f7f7f7; }
.explode { justify-self: end; display: grid; grid-template-columns: 8px 22px 48px 78px 114px 112px 13px; align-items: stretch; border-left: 1px solid #bbb; }
.explode label { align-self: center; padding-left: 2px; }
.explode .tb { padding-left: 4px; }
.explode input { appearance: none; align-self: center; margin-left: 2px; width: 106px; height: 12px; background: linear-gradient(#777, #777) center / 100% 1px no-repeat; }
.explode input::-webkit-slider-thumb { appearance: none; width: 2px; height: 10px; background: #666; }
.sel { display: flex; align-items: center; background: #fff; position: relative; }
.sel select { appearance: none; flex: 1; min-width: 0; padding-left: 6px; height: 100%; }
.sel svg { margin: 0 2px; }
.explode .sel { margin: 3px 0 1px 0; }

.work { flex: 1; min-height: 0; display: grid; grid-template-columns: 386px 1fr; column-gap: 5px; padding-right: 1px; }
.left { display: grid; grid-template-rows: 242px 164px 1fr; row-gap: 6px; min-width: 0; }
.right { display: flex; flex-direction: column; min-width: 0; }
.panel { position: relative; display: flex; flex-direction: column; min-width: 0; min-height: 0; }
.head { display: flex; align-items: center; margin: 0; height: 16px; padding: 0 2px 0 3px; background: linear-gradient(90deg, #c3cedb, #d9e5f3); font-size: 9px; font-weight: 400; color: #566170; border-bottom: 1px solid #8b8f94; flex: none; box-sizing: border-box; }
.tools { margin-left: auto; display: flex; gap: 4px; }
.tools svg { width: 8px; height: 8px; }

.filter { display: grid; grid-template-columns: 36px 79px 119px 20px 20px 18px 19px 20px; height: 21px; background: #ededed; align-items: stretch; border-left: 1px solid #ccc; }
.filter label { align-self: center; padding-left: 8px; }
.filter .sel, .filter input { margin: 4px 0 3px; }
.filter .sel select { padding-left: 4px; }
.filter input { background: #fff; margin-left: 6px; min-width: 0; }
.outline { background: #fff; border-right: 1px solid #d5d5d5; }
.tree { list-style: none; margin: 0; padding: 0 0 0 2px; height: 178px; display: flex; flex-direction: column; font-family: "DejaVu Sans Condensed", "DejaVu Sans", sans-serif; }
.tree li { flex: 1; display: flex; align-items: center; min-height: 0; }
.guide { position: relative; width: 21px; align-self: stretch; display: flex; align-items: center; justify-content: center; }
.guide.tee::before, .guide.last::before { content: ""; position: absolute; left: 10px; top: 0; bottom: 0; border-left: 1px dotted #999; }
.guide.last::before { bottom: 50%; }
.guide:not(.tee):not(.last):not(.first):nth-child(2)::before { content: ""; position: absolute; left: 10px; top: 0; bottom: 0; }
.guide.v::before { border-left: 1px dotted #999; }
.guide.tee::after, .guide.last::after, .guide.first::after { content: ""; position: absolute; left: 11px; right: 0; top: 50%; border-top: 1px dotted #999; }
.box { position: relative; z-index: 1; box-sizing: border-box; width: 8px; height: 8px; border: 1px solid #888; background: #fff; display: flex; align-items: center; justify-content: center; }
.box svg { width: 6px; height: 6px; }
.status { width: 7px; align-self: stretch; display: flex; align-items: flex-end; position: relative; z-index: 1; }
.status svg { width: 9px; height: 9px; margin-right: -2px; }
.nic { width: 13px; height: 12px; }
.lbl { margin-left: 2px; padding: 0 1px; line-height: 12px; }
.bold { font-weight: 700; color: #000; }
.selected { background: #e9e9e9; }

.dbody { display: grid; grid-template-columns: 371px 13px; column-gap: 2px; flex: 1; min-height: 0; background: #fff; }
.dclip { overflow: hidden; height: 148px; }
.dclip table { border-collapse: collapse; width: 100%; height: 158px; table-layout: fixed; line-height: 12px; }
.dclip td, .dclip th { padding: 0 0 0 2px; border: 1px solid #b5b5b5; text-align: left; font-weight: 400; height: 13px; }
.c1 { width: 13px; }
.c2 { width: 117px; }
.dclip .tg { padding: 0; border-left: 1px solid #777; border-top-color: #fff; border-bottom-color: #fff; }
.tg .box { margin: 0 auto; }
.dclip .group th { font-weight: 700; }
.ro td:last-child { background: #e4e4e2; }
.edit th { background: #3097fb; color: #d5ecff; }
.dclip .edit td:last-child { padding: 0; }
.pair { display: grid; grid-template-columns: 1fr 1fr; }
.pair button { height: 13px; background: #efefef; border-right: 1px solid #666; border-bottom: 1px solid #777; line-height: 11px; }
.vscroll { background: #efefef; display: flex; flex-direction: column; align-items: center; border-left: 1px solid #ccc; }
.vscroll .thumb { width: 9px; height: 62px; margin-top: 4px; border: 1px solid #999; background: repeating-linear-gradient(#888 0 1px, transparent 1px 3px) center / 5px 7px no-repeat, linear-gradient(90deg, #f2f2f2, #cfcfcf); }
.up, .dn, .lt, .rt { width: 0; height: 0; border: 3px solid transparent; }
.up { border-bottom-color: #444; margin-top: 2px; }
.dn { border-top-color: #444; margin: auto 0 1px; }
.lt { border-right-color: #444; }
.rt { border-left-color: #444; margin-left: auto; }
.pointer { position: absolute; left: 311px; top: 41px; width: 36px; height: 36px; mix-blend-mode: multiply; }

.seltool { display: grid; grid-template-columns: 9px 85px 126px 6px 21px 9px 1fr; height: 20px; background: #ededed; align-items: stretch; overflow: hidden; }
.seltool label { align-self: center; padding-left: 3px; }
.seltool .sel { margin: 3px 0; }
.seltool .sel select { padding-left: 4px; }
.seltool .tb { padding-left: 3px; }
.selbody { flex: 1; background: #9f9f9f; overflow: hidden; border-left: 2px solid #8a8a8a; border-top: 1px solid #777; }
.selbody table { border-collapse: collapse; table-layout: fixed; width: 384px; line-height: 12px; }
.selbody th, .selbody td { padding: 0; font-weight: 400; text-align: center; border-right: 1px solid #bbb; border-bottom: 1px solid #bbb; white-space: nowrap; }
.selbody th { background: #ededed; width: 73px; height: 26px; padding-top: 1px; vertical-align: top; border-right-color: #777; border-bottom-color: #888; }
.selbody th:first-child { width: 78px; }
.selbody th:nth-child(2) { width: 77px; }
.selbody th.cut { width: auto; }
.selbody td { background: #fff; height: 12px; }
.hscroll { display: flex; align-items: center; height: 14px; background: #ededed; padding: 0 4px; border-bottom: 1px solid #aaa; }
.hscroll .thumb { height: 10px; width: 310px; margin-left: 7px; border: 1px solid #999; background: repeating-linear-gradient(90deg, #888 0 1px, transparent 1px 3px) center / 7px 5px no-repeat, linear-gradient(#f6f6f6, #d2d2d2); }

.viewport { position: relative; flex: 1; min-height: 391px; border-top: 1px solid #5d6ca8; border-left: 1px solid #888; box-sizing: border-box; background: linear-gradient(#7290e0, #8fa7e8 25%, #b4c3f0 52%, #dee4f9 80%, #fefefe); }
.scene { position: absolute; left: -1px; top: -1px; width: 620px; height: 391px; }
.scale text { font: 11px "Liberation Sans", Arial, sans-serif; text-anchor: middle; fill: #222; }
.lg, .lr, .lb { font: 11px "Liberation Sans", Arial, sans-serif; }
.lg { fill: #27b560; }
.lr { fill: #d84a5c; }
.lb { fill: #3038a8; }
.orient { position: absolute; right: 14px; bottom: 31px; width: 98px; height: 85px; }
.brand { position: absolute; right: 16px; top: 8px; width: 78px; display: flex; flex-direction: column; color: #fff; text-align: right; }
.brand strong { font-size: 20px; line-height: 22px; padding-right: 6px; }
.brand span { font-size: 12px; line-height: 14px; padding-right: 6px; }
.brand em { margin-top: 7px; font-style: normal; font-size: 11px; line-height: 15px; text-align: center; background: #8ba3dd; }
.tabs { display: flex; align-items: stretch; height: 14px; background: #ececec; border: 1px solid #444; margin-bottom: 5px; flex: none; box-sizing: border-box; }
.tabs svg { width: 8px; height: 12px; }
.tabs button { line-height: 12px; }
.tabs .on { font-weight: 700; }
.messages { height: 144px; flex: none; }
.mbody { flex: 1; background: #9f9f9f; border-bottom: 1px solid #777; }
.mbody table { border-collapse: collapse; table-layout: fixed; width: 824px; }
.mbody th { height: 14px; padding: 0 0 0 3px; background: #ededed; text-align: left; font-weight: 400; line-height: 12px; border-right: 1px solid #777; border-bottom: 1px solid #aaa; }
.mbody th:nth-child(1) { width: 36px; }
.mbody th:nth-child(2) { width: 365px; }
.mbody th:nth-child(3) { width: 238px; }

.statusbar { display: grid; grid-template-columns: 343px 165px 138px 305px 1fr; height: 16px; margin-top: 4px; background: #ededed; border-top: 1px solid #bbb; box-sizing: border-box; }
.statusbar span { display: flex; align-items: center; gap: 3px; padding-left: 3px; border-right: 1px solid #aaa; white-space: nowrap; overflow: hidden; }
.statusbar span:last-child { border: 0; }
.statusbar svg { width: 13px; height: 13px; }
.taskbar { display: flex; gap: 2px; height: 7px; padding-left: 9px; background: linear-gradient(90deg, #1b4f86 0, #2f86b8 80px, #3a98cc 35%, #2b74b8 55%, #174a8c 70%, #1a4780); }
.taskbar .orb { align-self: flex-start; width: 26px; height: 26px; margin-top: -4px; margin-right: 46px; border-radius: 50%; background: linear-gradient(90deg, #c8502c 40%, #6fae3e 60%); border: 1px solid #9ab; box-sizing: border-box; }
.taskbar i { width: 34px; background: #a9d4e6; border: 1px solid #2b5f80; border-width: 0 1px; }
.taskbar i:nth-of-type(1) { margin-right: 72px; }
.recorder { position: absolute; right: 0; bottom: 5px; width: 181px; height: 24px; box-sizing: border-box; padding-left: 2px; display: grid; grid-template-columns: 30px 54px 44px 30px 1fr; align-items: center; background: #2d303a; color: #d6d8de; border-radius: 2px; }
.recorder > * { display: flex; align-items: center; justify-content: center; }
.recorder svg { width: 8px; height: 8px; }
</style>
